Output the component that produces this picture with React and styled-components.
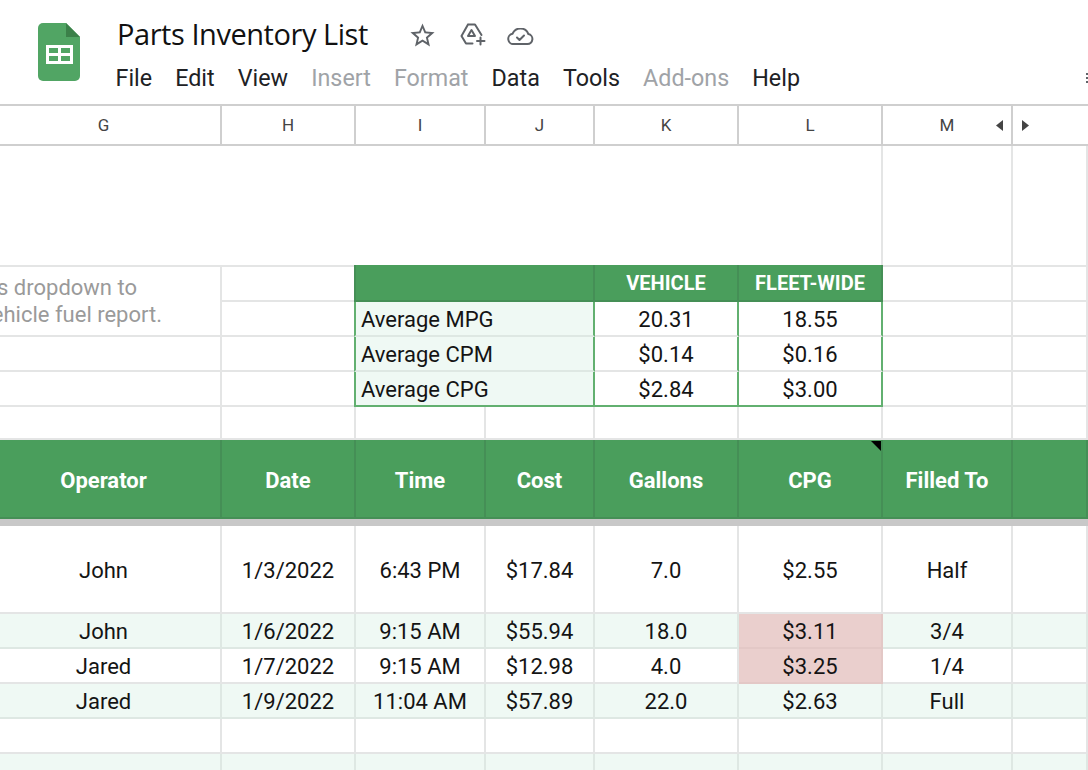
import React from "react";
import styled, { createGlobalStyle, css } from "styled-components";

const Global = createGlobalStyle`
  html, body { margin: 0; padding: 0; background: #fff; }
  body { width: 1088px; height: 770px; overflow: hidden; font-family: Roboto, "Liberation Sans", sans-serif; color: #111; }
`;

const GREEN = "#4a9e5c";
const GREEN_LINE = "#458f56";
const OUTLINE = "#62b070";
const TINT = "#eff9f4";
const LINE = "#e4e5e5";
const TINT_LINE = "#dee8e3";
const PINK = "#eacfcd";
const PINK_LINE = "#e3c8c6";
const COLS = "235px 134px 130px 109px 144px 144px 130px 75px";

const Page = styled.div`
  width: 1088px;
  height: 770px;
  overflow: hidden;
`;

const Header = styled.header`
  display: flex;
  height: 104px;
  box-sizing: border-box;
  padding: 23px 0 0 38px;
`;

const Logo = styled.svg`
  width: 42px;
  height: 58px;
  flex: none;
`;

const HeaderText = styled.div`
  flex: 1;
  display: flex;
  flex-direction: column;
  margin-left: 36px;
`;

const TitleRow = styled.div`
  display: flex;
  align-items: flex-start;
  height: 38px;
  margin-top: -6px;
  padding-left: 1px;
`;

const Title = styled.h1`
  margin: 0;
  font: 400 29px/34px "Open Sans", Roboto, sans-serif;
  letter-spacing: -0.45px;
  color: #111;
  white-space: nowrap;
  width: 291px;
`;

const DocIcon = styled.svg`
  flex: none;
  display: block;
  margin-right: ${(p) => p.$gap}px;
  margin-top: ${(p) => p.$top}px;
  color: #5f6368;
`;

const MenuBar = styled.nav`
  display: flex;
  align-items: center;
  gap: 23.1px;
  height: 30px;
  margin-top: 8px;
  margin-left: -0.5px;
`;

const MenuItem = styled.span`
  font-size: 23.3px;
  line-height: 30px;
  color: ${(p) => (p.$off ? "#a0a3a7" : "#202124")};
`;

const MoreDots = styled.span`
  margin-left: auto;
  width: 2px;
  display: flex;
  flex-direction: column;
  gap: 2px;
`;

const Dot = styled.i`
  width: 2px;
  height: 2px;
  background: #5f6368;
`;

const ColHead = styled.div`
  display: grid;
  grid-template-columns: ${COLS};
  margin-left: -13px;
  height: 42px;
  box-sizing: border-box;
  border-top: 2px solid #cfcfcf;
  border-bottom: 2px solid #cfcfcf;
`;

const ColLabel = styled.div`
  position: relative;
  display: flex;
  align-items: center;
  justify-content: center;
  border-right: 2px solid #cfcfcf;
  font-size: 17px;
  color: #444;
  &:last-child { border-right: 0; justify-content: flex-start; padding-left: 9px; }
`;

const ScrollArrow = styled.svg`
  width: 7px;
  height: 11px;
  fill: #444;
`;

const LeftArrow = styled(ScrollArrow)`
  position: absolute;
  right: 8px;
  top: 14px;
`;

const Sheet = styled.div`
  display: grid;
  grid-template-columns: ${COLS};
  grid-template-rows: 121px repeat(4, 35px) 33px 79px 7px 88px repeat(4, 35px) 35px;
  margin-left: -13px;
`;

const Cell = styled.div`
  display: flex;
  align-items: center;
  justify-content: center;
  box-sizing: border-box;
  min-width: 0;
  padding-top: 2px;
  font-size: 22px;
  white-space: nowrap;
  color: #141414;
  background: ${(p) => (p.$pink ? PINK : p.$tint ? TINT : "#fff")};
  border-right: 2px solid ${(p) => (p.$pink ? PINK_LINE : p.$tint ? TINT_LINE : LINE)};
  border-bottom: 2px solid ${(p) => (p.$pink ? PINK_LINE : p.$tint ? TINT_LINE : LINE)};
  ${(p) => p.$colspan && css`grid-column: span ${p.$colspan};`}
`;

const Note = styled(Cell)`
  grid-row: span 2;
  flex-direction: column;
  align-items: flex-end;
  padding-top: 0;
  padding-right: 58px;
  line-height: 27px;
  color: #9a9a9a;
  overflow: hidden;
`;

const NoteLine = styled.span`
  margin-right: ${(p) => p.$inset || 0}px;
`;

const SummaryHead = styled(Cell)`
  margin-top: -2px;
  height: calc(100% + 2px);
  padding-top: 0;
  background: ${GREEN};
  color: #fff;
  font-weight: 700;
  font-size: 20px;
  border-right: 2px solid ${GREEN_LINE};
  border-bottom: 2px solid ${GREEN_LINE};
  ${(p) => p.$first && css`margin-left: -2px; border-left: 2px solid ${GREEN_LINE};`}
`;

const SummaryLabel = styled(Cell)`
  grid-column: span 2;
  justify-content: flex-start;
  margin-left: -2px;
  padding-left: 5px;
  background: ${TINT};
  border-left: 2px solid ${OUTLINE};
  border-right: 2px solid ${OUTLINE};
  border-bottom: 2px solid ${(p) => (p.$last ? OUTLINE : TINT_LINE)};
`;

const SummaryValue = styled(Cell)`
  border-right: 2px solid ${OUTLINE};
  border-bottom: 2px solid ${(p) => (p.$last ? OUTLINE : LINE)};
`;

const HeadCell = styled(Cell)`
  position: relative;
  padding-top: 4px;
  background: ${GREEN};
  color: #fff;
  font-weight: 700;
  border-right: 2px solid ${GREEN_LINE};
  border-bottom: 2px solid ${GREEN_LINE};
`;

const Corner = styled.span`
  position: absolute;
  top: 1px;
  right: 0;
  border-top: 10px solid #000;
  border-left: 10px solid transparent;
`;

const FreezeBar = styled.div`
  grid-column: 1 / -1;
  background: #c8c8c8;
`;

const summary = [
  ["Average MPG", "20.31", "18.55"],
  ["Average CPM", "$0.14", "$0.16"],
  ["Average CPG", "$2.84", "$3.00"],
];

const heads = ["Operator", "Date", "Time", "Cost", "Gallons", "CPG", "Filled To", ""];

const rows = [
  { cells: ["John", "1/3/2022", "6:43 PM", "$17.84", "7.0", "$2.55", "Half", ""] },
  { tint: true, pink: true, cells: ["John", "1/6/2022", "9:15 AM", "$55.94", "18.0", "$3.11", "3/4", ""] },
  { pink: true, cells: ["Jared", "1/7/2022", "9:15 AM", "$12.98", "4.0", "$3.25", "1/4", ""] },
  { tint: true, cells: ["Jared", "1/9/2022", "11:04 AM", "$57.89", "22.0", "$2.63", "Full", ""] },
  { cells: ["", "", "", "", "", "", "", ""] },
  { tint: true, cells: ["", "", "", "", "", "", "", ""] },
];

const menu = [["File"], ["Edit"], ["View"], ["Insert", true], ["Format", true], ["Data"], ["Tools"], ["Add-ons", true], ["Help"]];

export default function App() {
  return (
    <Page>
      <Global />
      <Header>
        <Logo viewBox="0 0 42 58">
          <path d="M5 0H28L42 14V53a5 5 0 0 1-5 5H5a5 5 0 0 1-5-5V5a5 5 0 0 1 5-5z" fill="#51a564" />
          <path d="M28 0L42 14H28z" fill="#3b8049" />
          <path d="M8 22H35V41H8z" fill="#fff" />
          <path d="M11 25H20V30H11zM23 25H32V30H23zM11 33H20V38H11zM23 33H32V38H23z" fill="#51a564" />
        </Logo>
        <HeaderText>
          <TitleRow>
            <Title>Parts Inventory List</Title>
            <DocIcon $gap={23} $top={4} width="29" height="29" viewBox="0 0 24 24" fill="currentColor">
              <path d="M22 9.24l-7.19-.62L12 2 9.19 8.63 2 9.24l5.46 4.73L5.82 21 12 17.27 18.18 21l-1.63-7.03L22 9.24zM12 15.4l-3.76 2.27 1-4.28-3.32-2.88 4.38-.38L12 6.1l1.71 4.04 4.38.38-3.32 2.88 1 4.28L12 15.4z" />
            </DocIcon>
            <DocIcon $gap={21} $top={6} width="26" height="23" viewBox="0 0 26 23" fill="none" stroke="currentColor" strokeWidth="2" strokeLinejoin="round" strokeLinecap="round">
              <path d="M8 1.5H15L21.5 12M12.5 20.5H6L1.5 13L8 1.5" />
              <path d="M11.5 7L15 13H8z" />
              <path d="M20.5 14.5V21.5M17 18H24.5" />
            </DocIcon>
            <DocIcon $gap={0} $top={11} width="27" height="17" viewBox="0 0 27 17" fill="none" stroke="currentColor" strokeWidth="2" strokeLinejoin="round" strokeLinecap="round">
              <path d="M7 16H20.5a5 5 0 0 0 .9-9.9A8.5 8.5 0 0 0 5.6 5.7 5.2 5.2 0 0 0 7 16z" />
              <path d="M10 9.5l2.5 2.5 4.5-4.5" />
            </DocIcon>
          </TitleRow>
          <MenuBar>
            {menu.map(([label, off]) => (
              <MenuItem key={label} $off={off}>{label}</MenuItem>
            ))}
            <MoreDots><Dot /><Dot /><Dot /></MoreDots>
          </MenuBar>
        </HeaderText>
      </Header>

      <ColHead>
        <ColLabel>G</ColLabel>
        <ColLabel>H</ColLabel>
        <ColLabel>I</ColLabel>
        <ColLabel>J</ColLabel>
        <ColLabel>K</ColLabel>
        <ColLabel>L</ColLabel>
        <ColLabel>
          M
          <LeftArrow viewBox="0 0 7 11"><path d="M7 0V11L0 5.5z" /></LeftArrow>
        </ColLabel>
        <ColLabel>
          <ScrollArrow viewBox="0 0 7 11"><path d="M0 0V11L7 5.5z" /></ScrollArrow>
        </ColLabel>
      </ColHead>

      <Sheet>
        <Cell $colspan={6} />
        <Cell />
        <Cell />

        <Note>
          <NoteLine $inset={25}>s dropdown to</NoteLine>
          <NoteLine>ehicle fuel report.</NoteLine>
        </Note>
        <Cell />
        <SummaryHead $first $colspan={2} />
        <SummaryHead>VEHICLE</SummaryHead>
        <SummaryHead>FLEET-WIDE</SummaryHead>
        <Cell />
        <Cell />

        {summary.map(([label, vehicle, fleet], i) => (
          <React.Fragment key={label}>
            {i > 0 && <Cell />}
            <Cell />
            <SummaryLabel $last={i === 2}>{label}</SummaryLabel>
            <SummaryValue $last={i === 2}>{vehicle}</SummaryValue>
            <SummaryValue $last={i === 2}>{fleet}</SummaryValue>
            <Cell />
            <Cell />
          </React.Fragment>
        ))}

        {heads.map((_, i) => <Cell key={i} />)}

        {heads.map((h, i) => (
          <HeadCell key={i}>
            {h}
            {h === "CPG" && <Corner />}
          </HeadCell>
        ))}

        <FreezeBar />

        {rows.map((r, i) =>
          r.cells.map((c, j) => (
            <Cell key={`${i}-${j}`} $tint={r.tint} $pink={r.pink && j === 5}>{c}</Cell>
          ))
        )}
      </Sheet>
    </Page>
  );
}
